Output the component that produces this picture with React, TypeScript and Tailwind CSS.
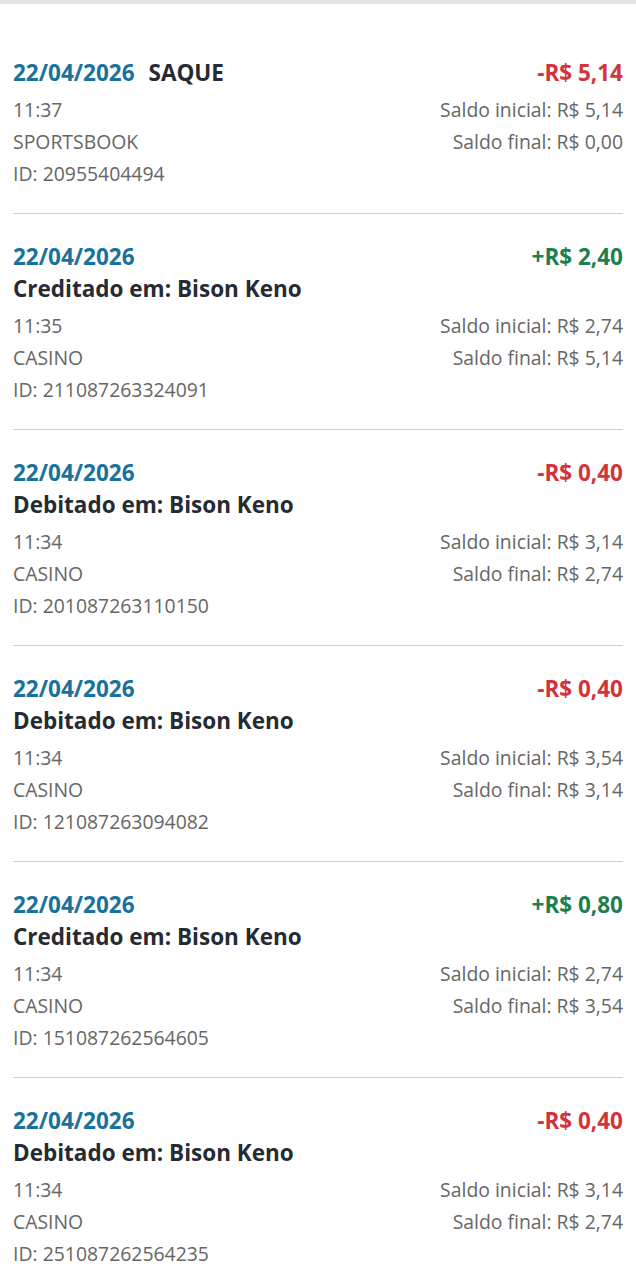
const entries = [
  { date: "22/04/2026", kind: "SAQUE", title: "", amount: "-R$ 5,14", credit: false, time: "11:37", source: "SPORTSBOOK", id: "20955404494", start: "5,14", end: "0,00" },
  { date: "22/04/2026", kind: "", title: "Creditado em: Bison Keno", amount: "+R$ 2,40", credit: true, time: "11:35", source: "CASINO", id: "211087263324091", start: "2,74", end: "5,14" },
  { date: "22/04/2026", kind: "", title: "Debitado em: Bison Keno", amount: "-R$ 0,40", credit: false, time: "11:34", source: "CASINO", id: "201087263110150", start: "3,14", end: "2,74" },
  { date: "22/04/2026", kind: "", title: "Debitado em: Bison Keno", amount: "-R$ 0,40", credit: false, time: "11:34", source: "CASINO", id: "121087263094082", start: "3,54", end: "3,14" },
  { date: "22/04/2026", kind: "", title: "Creditado em: Bison Keno", amount: "+R$ 0,80", credit: true, time: "11:34", source: "CASINO", id: "151087262564605", start: "2,74", end: "3,54" },
  { date: "22/04/2026", kind: "", title: "Debitado em: Bison Keno", amount: "-R$ 0,40", credit: false, time: "11:34", source: "CASINO", id: "251087262564235", start: "3,14", end: "2,74" },
]

export default function App() {
  return (
    <div className="min-h-screen bg-white font-['Open_Sans',sans-serif]">
      <div className="h-[4px] bg-[#e3e3e3]" />
      <div className="pt-[26px] px-[13px]">
        {entries.map((e, i) => (
          <div key={i} className={i > 0 ? "border-t border-[#cfcfcf] pt-[27px] pb-[23px]" : "pt-[27px] pb-[23px]"}>
            {/* header */}
            <div className="flex items-center justify-between h-[32px] text-[22.5px] font-bold">
              <div className="flex items-center gap-[14px]">
                <span className="text-[#19729c]">{e.date}</span>
                {e.kind && <span className="text-[#262b33]">{e.kind}</span>}
              </div>
              <span className={e.credit ? "text-[#1f7f4f]" : "text-[#d1343a]"}>{e.amount}</span>
            </div>
            {e.title && (
              <div className="h-[32px] flex items-center text-[22.5px] font-bold text-[#262b33]">{e.title}</div>
            )}
            {/* details */}
            <div className="mt-[5px] text-[19.4px] text-[#666666]">
              <div className="flex items-center justify-between h-[32px]">
                <span>{e.time}</span>
                <span>Saldo inicial: R$ {e.start}</span>
              </div>
              <div className="flex items-center justify-between h-[32px]">
                <span>{e.source}</span>
                <span>Saldo final: R$ {e.end}</span>
              </div>
              <div className="flex items-center h-[32px]">ID: {e.id}</div>
            </div>
          </div>
        ))}
      </div>
    </div>
  )
}
